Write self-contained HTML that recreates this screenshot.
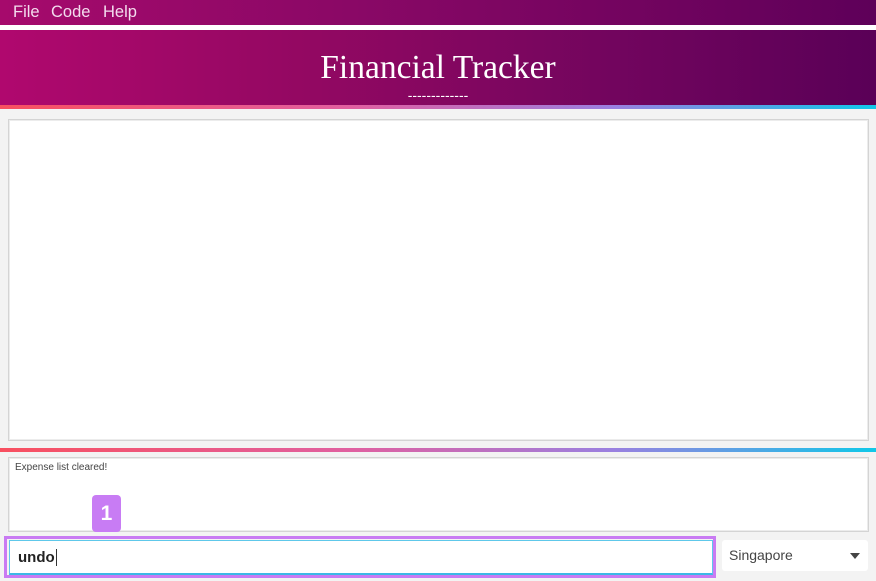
<!DOCTYPE html>
<html><head><meta charset="utf-8"><style>
*{margin:0;padding:0;box-sizing:border-box}
body{width:876px;height:581px;background:#f3f3f3;position:relative;overflow:hidden;font-family:"Liberation Sans",sans-serif}
.menu{position:absolute;left:0;top:0;width:876px;height:25px;background:linear-gradient(90deg,#a60a6c,#8a0866 40%,#5e0059);color:#f3dcee;font-size:16.5px}
.menu span{position:absolute;top:3px}
.white{position:absolute;top:25px;left:0;width:876px;height:5px;background:#fff}
.hdr{position:absolute;top:30px;left:0;width:876px;height:75px;background:linear-gradient(90deg,#b0086e,#930862 35%,#72055e 70%,#5a0057);color:#fff;text-align:center}
.hdr h1{font-family:"Liberation Serif",serif;font-weight:normal;font-size:33.5px;position:absolute;top:19px;width:100%}
.hdr .d{position:absolute;top:57px;width:100%;font-size:14px}
.grad{position:absolute;left:0;width:876px;height:4px;background:linear-gradient(90deg,#f85060,#e060a0 40%,#9a80e0 70%,#10c8e8)}
.box{position:absolute;background:#fff;border:1px solid #d4d4d4;box-shadow:inset 0 0 0 1px #ececec}
.badge{position:absolute;left:92px;top:495px;width:29px;height:37px;background:#c87cf4;border-radius:4px;color:#fff;font-size:21px;text-align:center;line-height:37px;font-weight:bold}
.hl{position:absolute;left:4px;top:536px;width:712px;height:42px;border:3px solid #c97bf3}
.inp{position:absolute;left:9px;top:540px;width:704px;height:35px;background:#fff;border:1px solid #5ec8ea;border-bottom:2px solid #3cb8e6;font-size:15px;font-weight:bold;padding:8px 8px;color:#222}
.sel{position:absolute;left:722px;top:540px;width:146px;height:31px;background:#fff;border-radius:3px;font-size:14px;color:#444;padding:7px 7px}
.sel i{position:absolute;right:8px;top:13px;border-left:5px solid transparent;border-right:5px solid transparent;border-top:6px solid #444}
</style></head><body>
<div class="menu"><span style="left:13px">File</span><span style="left:51px">Code</span><span style="left:103px">Help</span></div>
<div class="white"></div>
<div class="hdr"><h1>Financial Tracker</h1><div class="d">-------------</div></div>
<div class="grad" style="top:105px"></div>
<div class="box" style="left:8px;top:119px;width:861px;height:322px"></div>
<div class="grad" style="top:448px"></div>
<div class="box" style="left:8px;top:457px;width:861px;height:75px"><div style="font-size:10px;color:#444;padding:4px 6px">Expense list cleared!</div></div>
<div class="badge">1</div>
<div class="hl"></div>
<div class="inp">undo<span style="border-left:1px solid #333;margin-left:1px"></span></div>
<div class="sel">Singapore<i></i></div>
</body></html>
